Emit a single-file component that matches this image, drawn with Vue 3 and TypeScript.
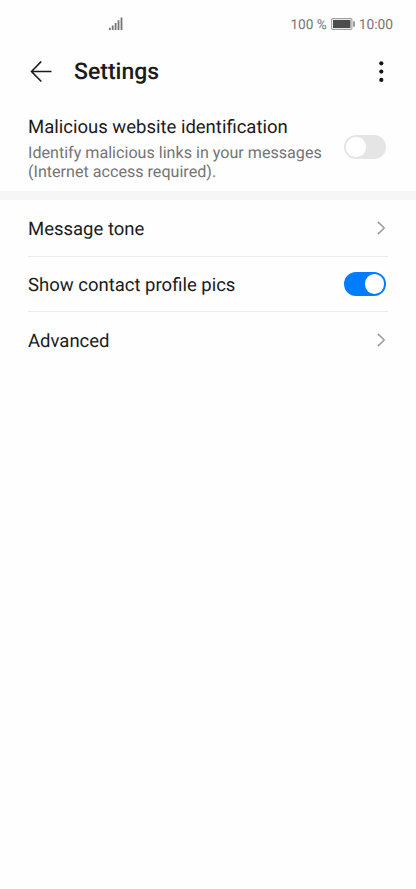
<script setup lang="ts">
import { ref } from 'vue'

interface Row {
  id: string
  label: string
  kind: 'link' | 'switch'
}

const rows: Row[] = [
  { id: 'tone', label: 'Message tone', kind: 'link' },
  { id: 'pics', label: 'Show contact profile pics', kind: 'switch' },
  { id: 'advanced', label: 'Advanced', kind: 'link' },
]

const identifyLinks = ref(false)
const showPics = ref(true)
</script>

<template>
  <main class="screen">
    <div class="status">
      <svg class="signal" width="16" height="14" viewBox="0 0 16 14">
        <path d="M1.8 10.8V13M4.7 8.6V13M7.6 6V13M10.5 3.2V13M13.5 .4V13" />
      </svg>
      <div class="status-right">
        <span class="percent">100 %</span>
        <svg class="battery" width="25" height="12" viewBox="0 0 25 12">
          <rect class="shell" x=".6" y=".6" width="20.3" height="10.8" rx="1.2" />
          <rect class="charge" x="2" y="2" width="17.5" height="8" />
          <rect class="tip" x="22.2" y="3.2" width="1.5" height="5.6" rx=".5" />
        </svg>
        <span class="clock">10:00</span>
      </div>
    </div>

    <header class="header">
      <svg class="back" width="22" height="22" viewBox="0 0 22 22">
        <path d="M11.3 .5 1.5 10.5 11.3 20.5M1.5 10.5H21.5" />
      </svg>
      <h1 class="title">Settings</h1>
      <svg class="more" width="6" height="22" viewBox="0 0 6 22">
        <circle cx="3.3" cy="2.3" r="2.1" />
        <circle cx="3.3" cy="10.6" r="2.1" />
        <circle cx="3.3" cy="18.9" r="2.1" />
      </svg>
    </header>

    <section class="malicious">
      <div class="copy">
        <div class="label">Malicious website identification</div>
        <div class="hint">Identify malicious links in your messages<br />(Internet access required).</div>
      </div>
      <button
        class="switch"
        :class="{ on: identifyLinks }"
        role="switch"
        :aria-checked="identifyLinks"
        @click="identifyLinks = !identifyLinks"
      ><span class="knob"></span></button>
    </section>

    <div class="band"></div>

    <section class="list">
      <div v-for="row in rows" :key="row.id" class="row">
        <span class="label">{{ row.label }}</span>
        <button
          v-if="row.kind === 'switch'"
          class="switch"
          :class="{ on: showPics }"
          role="switch"
          :aria-checked="showPics"
          @click="showPics = !showPics"
        ><span class="knob"></span></button>
        <svg v-else class="chevron" width="9" height="14" viewBox="0 0 9 14">
          <path d="M.9 .9 7.2 7 .9 13.1" />
        </svg>
      </div>
    </section>
  </main>
</template>

<style>
body {
  background: #fefefe;
}
</style>

<style scoped>
.screen {
  box-sizing: border-box;
  width: 416px;
  height: 889px;
  overflow: hidden;
  background: #fefefe;
  color: #1b1b1b;
  font-family: Roboto, 'Liberation Sans', sans-serif;
  text-rendering: geometricPrecision;
}
.status {
  display: flex;
  align-items: center;
  justify-content: space-between;
  height: 48px;
  padding: 0 23px 0 108px;
}
.signal {
  fill: none;
  stroke: #757575;
  stroke-width: 1.8;
}
.status-right {
  display: flex;
  align-items: center;
  color: #747474;
  font-size: 13.8px;
  line-height: 16px;
}
.percent,
.clock {
  padding-top: 2px;
}
.percent {
  font-size: 13.6px;
}
.battery {
  margin: 0 3px 0 4px;
}
.shell {
  fill: none;
  stroke: #a0a0a0;
  stroke-width: 1.1;
}
.charge {
  fill: #4c4c4c;
}
.tip {
  fill: #777;
}
.header {
  display: flex;
  align-items: center;
  height: 47px;
  padding: 0 32px 0 30px;
}
.back {
  fill: none;
  stroke: #1b1b1b;
  stroke-width: 1.6;
}
.title {
  flex: 1;
  margin: 0 0 0 22px;
  font-size: 23px;
  font-weight: 500;
  line-height: 28px;
}
.more {
  fill: #151515;
}
.malicious {
  display: flex;
  justify-content: space-between;
  box-sizing: border-box;
  height: 96px;
  padding: 20px 30px 0 28px;
}
.malicious .switch {
  margin-top: 20.3px;
}
.label {
  font-size: 18.5px;
  line-height: 24px;
  white-space: nowrap;
}
.hint {
  margin-top: 4px;
  color: #747474;
  font-size: 16.12px;
  line-height: 19px;
  white-space: nowrap;
}
.band {
  height: 9px;
  background: #f6f6f6;
}
.list {
  padding: 0 28px;
}
.row {
  display: flex;
  align-items: center;
  justify-content: space-between;
  box-sizing: border-box;
  height: 55px;
  padding-right: 2px;
}
.row .label {
  padding-top: 2px;
}
.row:first-child {
  height: 57px;
}
.row:last-child {
  height: 56px;
}
.row:not(:last-child) {
  border-bottom: 1px solid #ececec;
}
.switch {
  flex: none;
  display: flex;
  align-items: center;
  width: 42px;
  height: 23.5px;
  padding: 0 2px;
  border: 0;
  border-radius: 12px;
  background: #e5e5e5;
}
.switch.on {
  justify-content: flex-end;
  background: #007dff;
}
.knob {
  width: 19.5px;
  height: 19.5px;
  border-radius: 50%;
  background: #fff;
}
.chevron {
  fill: none;
  stroke: #9c9c9c;
  stroke-width: 1.5;
}
</style>
